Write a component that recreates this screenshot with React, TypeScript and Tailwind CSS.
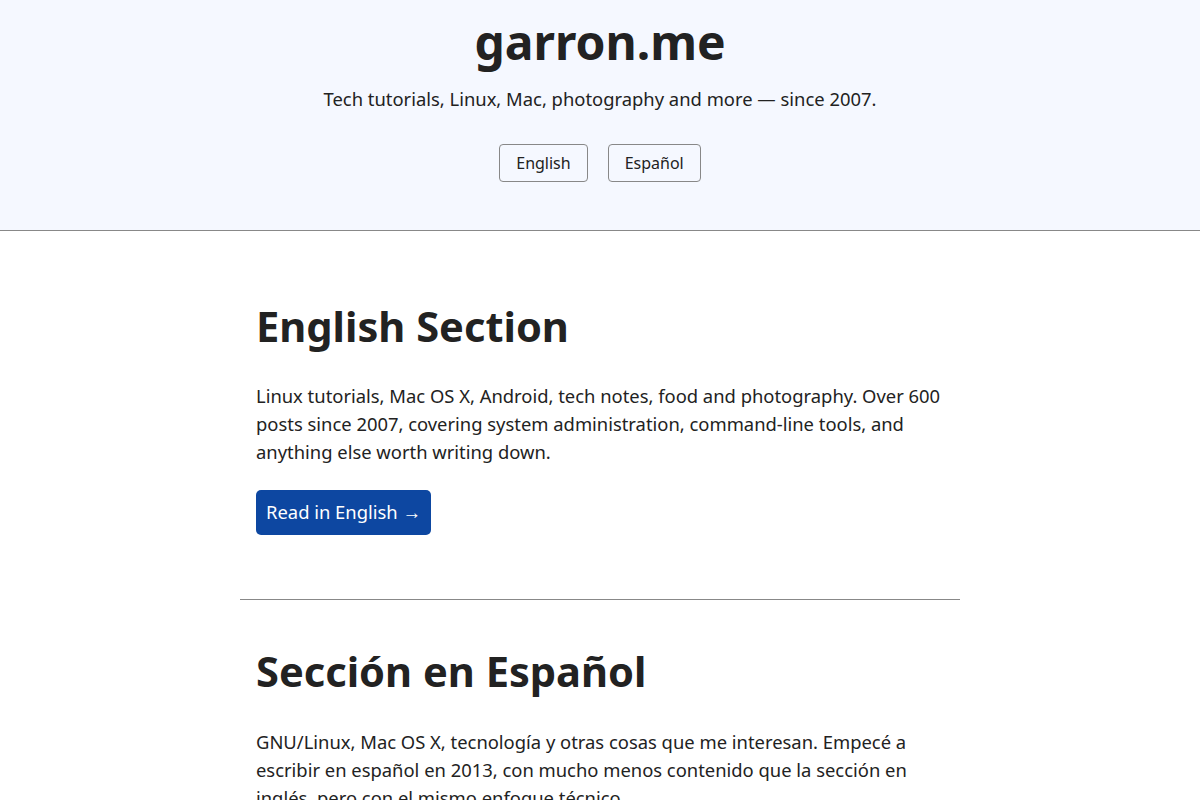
export default function App() {
  return (
    <div className="min-h-screen bg-white text-[#222] font-['Noto_Sans',sans-serif]">
      {/* ─── Header ─────────────────────────────────────────── */}
      <header className="bg-[#f5f8ff] border-b border-[#888] pt-[13px] pb-[48px] text-center">
        <h1 className="text-[48px] leading-[1.2] font-bold">garron.me</h1>
        <p className="mt-[14px] text-[18.4px] leading-[28px]">
          Tech tutorials, Linux, Mac, photography and more — since 2007.
        </p>
        <nav className="mt-[31px] flex justify-center gap-[20px]">
          <a href="#en" className="h-[38px] px-[16px] flex items-center border border-[#888] rounded-[4px] text-[16px]">
            English
          </a>
          <a href="#es" className="h-[38px] px-[16px] flex items-center border border-[#888] rounded-[4px] text-[16px]">
            Español
          </a>
        </nav>
      </header>

      {/* ─── Sections ───────────────────────────────────────── */}
      <main className="max-w-[720px] mx-auto">
        <section id="en" className="px-4 pt-[70px] pb-[64px]">
          <h2 className="text-[41.6px] leading-[50px] font-bold">English Section</h2>
          <p className="mt-[31px] text-[18.4px] leading-[28px]">
            Linux tutorials, Mac OS X, Android, tech notes, food and photography. Over 600 posts since 2007, covering
            system administration, command-line tools, and anything else worth writing down.
          </p>
          <a
            href="#"
            className="mt-[24px] inline-flex items-center h-[45px] px-[10px] bg-[#0d47a1] text-white rounded-[5px] text-[18.4px]"
          >
            Read in English →
          </a>
        </section>

        <hr className="border-0 border-t border-[#888]" />

        <section id="es" className="px-4 pt-[46px] pb-[64px]">
          <h2 className="text-[41.6px] leading-[50px] font-bold">Sección en Español</h2>
          <p className="mt-[32px] text-[18.4px] leading-[28px]">
            GNU/Linux, Mac OS X, tecnología y otras cosas que me interesan. Empecé a escribir en español en 2013, con
            mucho menos contenido que la sección en inglés, pero con el mismo enfoque técnico.
          </p>
          <a
            href="#"
            className="mt-[24px] inline-flex items-center h-[45px] px-[10px] bg-[#0d47a1] text-white rounded-[5px] text-[18.4px]"
          >
            Leer en Español →
          </a>
        </section>
      </main>
    </div>
  );
}
